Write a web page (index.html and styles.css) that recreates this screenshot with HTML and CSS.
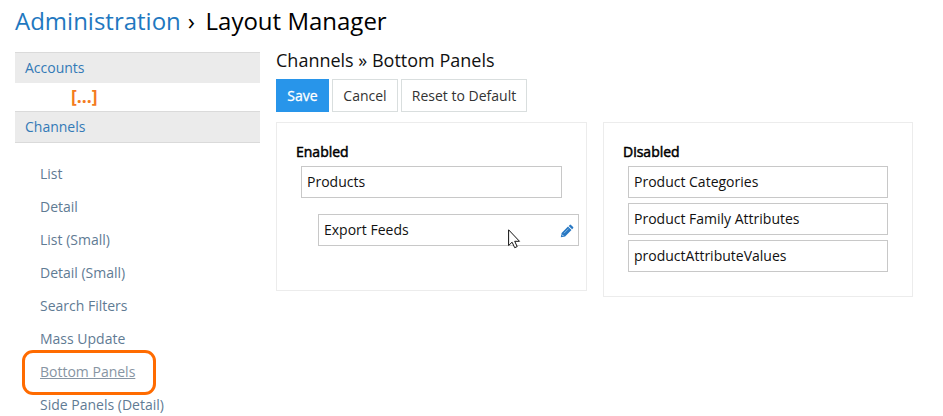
FILE: index.html
```html
<!DOCTYPE html>
<html lang="en">
<head>
<meta charset="utf-8">
<title>Layout Manager</title>
<link rel="stylesheet" href="styles.css">
</head>
<body>
<header class="page-header"><a class="crumb">Administration</a><span class="separator">›</span><span class="title">Layout Manager</span></header>
<div class="layout">
  <nav class="sidebar">
    <a class="scope">Accounts</a>
    <div class="omitted">[...]</div>
    <a class="scope scope-open">Channels</a>
    <ul class="layouts">
      <li><a>List</a></li>
      <li><a>Detail</a></li>
      <li><a>List (Small)</a></li>
      <li><a>Detail (Small)</a></li>
      <li><a>Search Filters</a></li>
      <li><a>Mass Update</a></li>
      <li class="selected"><a>Bottom Panels</a></li>
      <li><a>Side Panels (Detail)</a></li>
    </ul>
  </nav>
  <main class="content">
    <h2 class="subtitle">Channels » Bottom Panels</h2>
    <div class="buttons">
      <button class="btn btn-primary">Save</button>
      <button class="btn btn-cancel">Cancel</button>
      <button class="btn btn-reset">Reset to Default</button>
    </div>
    <div class="wells">
      <section class="well well-enabled">
        <h3 class="well-title">Enabled</h3>
        <div class="cell">Products</div>
        <div class="cell cell-dragged">Export Feeds
          <svg class="pencil" viewBox="0 0 14 14" width="14" height="14"><path fill="#2878c3" d="M.8 13.2l.8-4.3L8 2.5l3.5 3.5-6.4 6.4zM8.7 1.9l1-1q.7-.6 1.3 0l2.1 2.1q.6.6 0 1.3l-1 1z"/><path d="M4 9.2l4.6-4.6" stroke="#9cc6ea" stroke-width=".8"/><path d="M2 10.6l1.4 1.4" stroke="#fff" stroke-width=".8"/></svg>
          <svg class="cursor" viewBox="0 0 13 20" width="13" height="20"><path d="M.6.8v15.7l3.5-3.3 2.6 5.5 2.5-1.1-2.5-5.3h4.8z" fill="#fff" stroke="#111" stroke-width="1"/></svg>
        </div>
      </section>
      <section class="well well-disabled">
        <h3 class="well-title">Disabled</h3>
        <div class="cell">Product Categories</div>
        <div class="cell">Product Family Attributes</div>
        <div class="cell">productAttributeValues</div>
      </section>
    </div>
  </main>
</div>
</body>
</html>
```
FILE: styles.css
```css
*, *::after { box-sizing: border-box; }
html, body { height: 100%; }
body {
  margin: 0;
  padding: 0 30px 0 15px;
  overflow: hidden;
  background: #fff;
  color: #111;
  font: 14px/20px "Open Sans", sans-serif;
}
.page-header {
  height: 52px;
  padding-top: 4px;
  font-size: 24px;
  line-height: 33px;
  color: #000;
  white-space: nowrap;
}
.crumb { color: #1f78c0; }
.separator { margin: 0 10.5px 0 7px; }
.layout { display: flex; gap: 16px; }
.sidebar { width: 245px; flex: none; }
.scope {
  display: block;
  height: 31px;
  padding: 5px 10px;
  background: #ebebeb;
  border-top: 1px solid #dadada;
  color: #337ab7;
}
.scope-open { height: 32px; border-bottom: 1px solid #dadada; }
.omitted {
  height: 28px;
  padding-left: 56px;
  color: #f47b20;
  font-size: 17.5px;
  font-weight: 700;
  line-height: 26px;
}
.layouts { list-style: none; margin: 0; padding: 21px 0 0 25px; }
.layouts li { position: relative; height: 33px; color: #5f7b94; }
.layouts .selected { color: #8795a3; }
.selected a { text-decoration: underline; }
.selected::after {
  content: "";
  position: absolute;
  left: -18px;
  top: -12px;
  width: 134px;
  height: 45px;
  border: 3px solid #ff6b00;
  border-radius: 11px;
}
.content { flex: 1; min-width: 0; }
.subtitle {
  height: 27px;
  margin: 0;
  font-size: 18px;
  font-weight: 400;
  line-height: 17px;
}
.buttons { display: flex; gap: 3px; height: 43px; }
.btn {
  height: 33px;
  padding: 0;
  border: 1px solid #d9dede;
  background: #fff;
  color: #333;
  font: inherit;
  white-space: nowrap;
}
.btn-primary { width: 53px; background: #2895ea; border-color: #2895ea; color: #fff; -webkit-text-stroke: .3px #fff; }
.btn-cancel { width: 66px; }
.btn-reset { width: 126px; }
.wells { display: flex; gap: 16px; align-items: flex-start; }
.well { border: 1px solid #ececec; padding: 19px 24px 0; }
.well-enabled { width: 311px; height: 169px; }
.well-disabled { width: 310px; height: 175px; }
.well-title {
  height: 24px;
  margin: 0 0 0 -5px;
  color: #000;
  font-size: 14px;
  font-weight: 400;
  line-height: 20px;
  -webkit-text-stroke: .5px #000;
}
.cell {
  position: relative;
  height: 32px;
  width: 261px;
  margin-bottom: 5px;
  padding: 5px;
  border: 1px solid #c8c8c8;
  background: #fff;
}
.well-disabled .cell { width: 260px; }
.cell-dragged { margin: 16px 0 0 17px; }
.pencil { position: absolute; right: 4px; top: 9px; }
.cursor { position: absolute; left: 189px; top: 14px; }
```
